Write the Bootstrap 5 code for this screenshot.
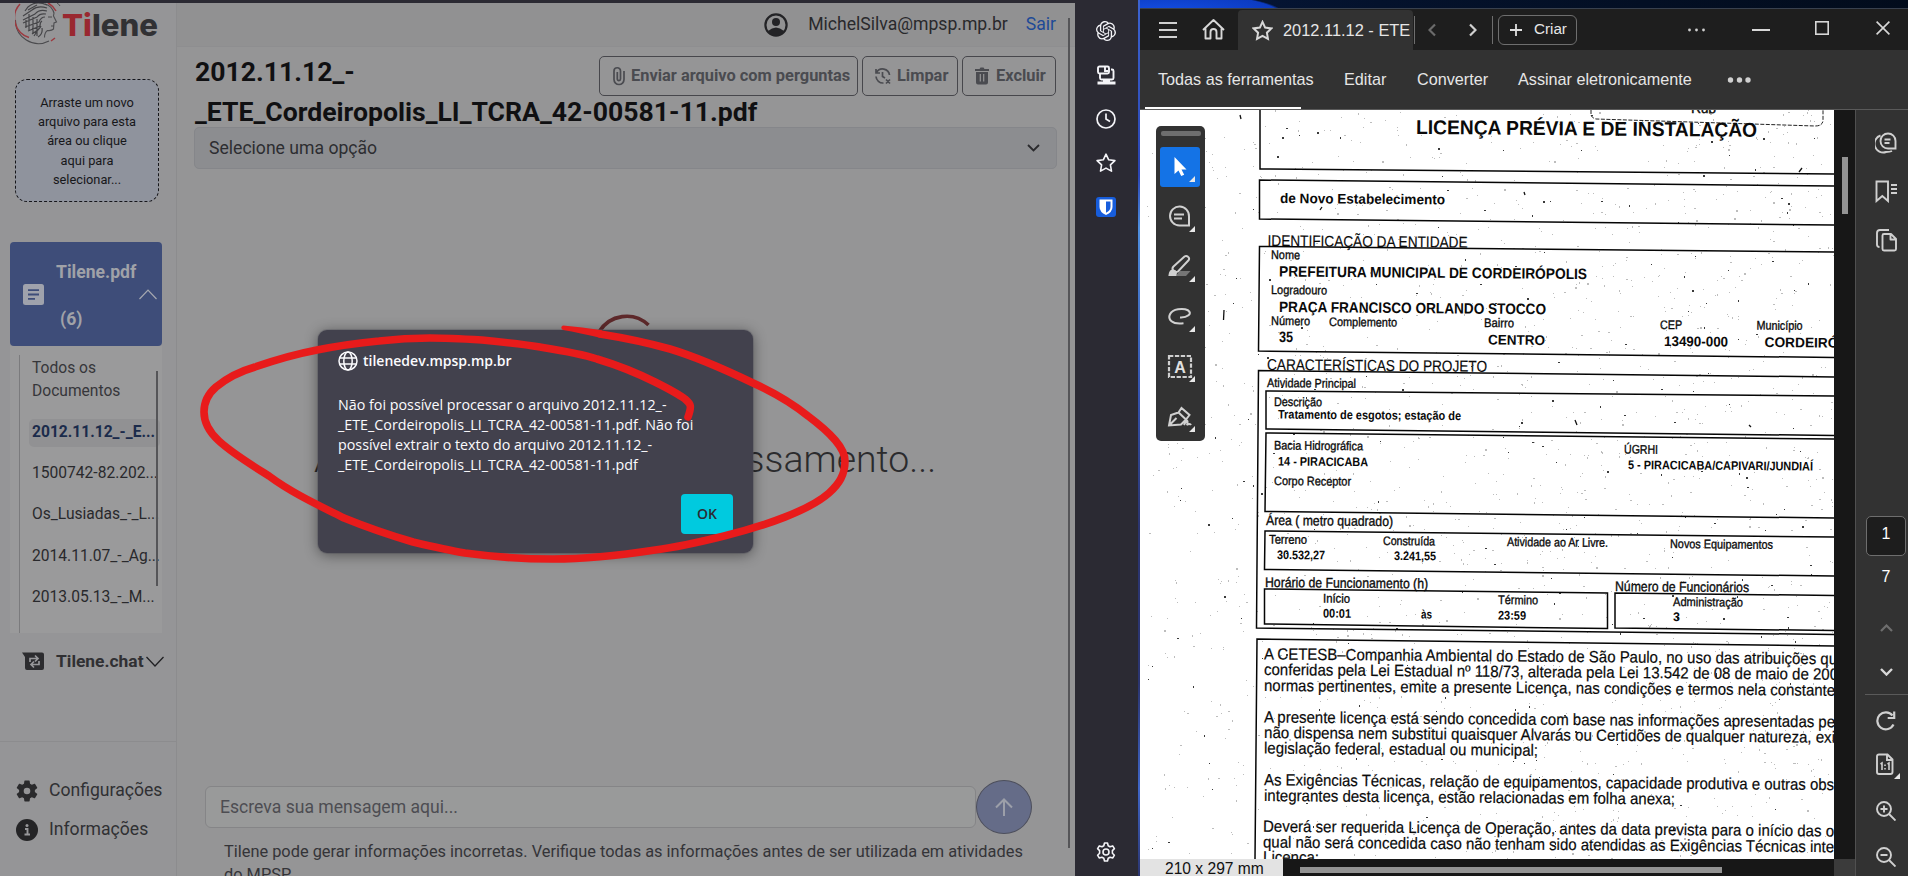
<!DOCTYPE html>
<html lang="pt-BR">
<head>
<meta charset="utf-8">
<title>Tilene</title>
<link rel="stylesheet" href="https://cdn.jsdelivr.net/npm/bootstrap@5.3.0/dist/css/bootstrap.min.css">
<script src="https://cdn.jsdelivr.net/npm/bootstrap@5.3.0/dist/js/bootstrap.bundle.min.js"></script>
<style>
html,body{height:876px;overflow:hidden;margin:0}
body{background:#2b2a33;font-family:Roboto,sans-serif;color:#29292c;font-size:17.6px}
svg{display:block;flex:none}
.desk{height:876px;width:1908px}
.tilene{width:1075px;padding-top:3px;background:#2b2a33}
.tilene-page{background:#959596;height:873px}
.side{width:177px;border-right:1px solid #8c8c8e;background:#959597}
.side-top{height:739px;border-bottom:1px solid #8c8c8e;padding:0 0 0 10px}
.logo-box{height:76px;padding-left:5px}
.drop{width:144px;height:123px;margin-left:5px;border:1px dashed #16161a;border-radius:12px;background:#8f939d;font-size:12.8px;line-height:19.2px;color:#17171a;padding-top:13px;text-align:center}
.pdf-head{width:152px;height:104px;margin-top:40px;background:#3e4d79;border-radius:4px;color:#a0a2a8;font-weight:700;font-size:17.6px}
.pdf-list{width:152px;height:287px;background:#9a9a9b}
.pdf-list ul{margin:9px 0 0 9px;border-left:1px solid #7b7b7d;height:278px;width:141px;font-size:15.6px;padding:0 0 0 9px;list-style:none}
.pdf-list li{height:28px;line-height:26px;margin-bottom:13.2px;padding-left:3px;white-space:nowrap;border-radius:5px}
.pdf-list li.first{height:46px;line-height:23px;margin:0 0 18px;padding-top:2px;color:#36363a}
.pdf-list li.on{background:#919193;color:#1b2b4b;font-weight:700}
.pdf-thumb{width:2px;height:215px;background:#555558;margin-top:25px}
.chat-head{width:154px;height:56px;font-weight:700;font-size:17.4px;color:#303033}
.foot-link{height:39px;padding-left:16px;color:#303033}
.head{height:44px;background:#919192;border-bottom:1px solid #8e8e90;padding-right:19px}
.doc-title{font-size:26.6px;line-height:40px;font-weight:700;color:#101012;margin:0;height:80px;width:600px}
.tbtn{height:40px;border:1px solid #47474c;border-radius:5px;color:#4a4b50;font-weight:700;font-size:16.4px;padding:0 9px 0 11px;white-space:nowrap}
.sel{height:42px;border:1px solid #85868a;border-radius:5px;background:#8c8d90;padding:0 16px 0 14px;width:863px;color:#2d2d31}
.msg{width:771px;height:42px;border:1px solid #858587;border-radius:6px;background:#999a9a;padding-left:14px;color:#4d4d52;line-height:41px}
.send{width:56px;height:54px;border-radius:50%;border:1px solid #4d4f5c;background:#656c88}
.note{font-size:16.37px;line-height:23px;color:#343438;padding:0 0 0 47px;white-space:nowrap;height:36px;overflow:hidden}
.waiting{font-weight:300;font-size:37.4px;color:#2b2b2d;white-space:nowrap;left:314px;top:431px;width:640px}
.vbar{left:1068px;top:18px;width:2px;height:830px;background:#555558}
.alertbox{left:318px;top:330px;width:435px;height:223px;background:#42414d;border-radius:9px;box-shadow:0 2px 14px rgba(0,0,0,.45),0 0 0 1px rgba(110,110,120,.4);color:#fbfbfe;font-family:"Open Sans","Noto Sans",sans-serif;font-size:14px;line-height:20px;padding:20px 20px 0 20px}
.amsg{font-size:14.3px;margin-top:23px;white-space:nowrap}
.okb{width:52px;height:40px;background:#00cadf;color:#2b2a33;border-radius:4px;font-weight:600}
.rail{width:63px;background:#2b2a33;padding:21px 2px 0 0}
.wall{width:2px;background:linear-gradient(#3c63d0,#2b46b4 20%,#4f8fe0 26%,#3553b0 45%,#2b3570 60%,#2b3570 78%,#3f66c8 90%,#2b3570)}
.acro{width:768px;font-family:"Liberation Sans",Arial,sans-serif;color:#e6e6e6;background:radial-gradient(ellipse 124px 22px at 20px 14px,#1450e8 0,#0c3bc0 96%,transparent 100%),linear-gradient(90deg,#06173a 0,#04122c 240px,#020c1c)}
.tabs{margin-top:8px;height:42px;background:#1e1e1e;border-top:1px solid #39414e;width:768px}
.tabone{width:175px;height:40px;margin-top:1px;background:#323232;border-radius:4px 4px 0 0;font-size:16.4px;white-space:nowrap}
.criar{width:79px;height:30px;border:1px solid #6e6e6e;border-radius:6px;font-size:15.2px}
.sep{width:1px;height:28px;background:#6e6e6e}
.menu{height:60px;background:#323232;border-bottom:1px solid #5a5a5a;font-size:16.2px;white-space:nowrap;padding-left:18px}
.underl{left:1145px;top:107px;width:156px;height:2px;background:#fff}
.scan text{transform-box:fill-box;transform-origin:0 100%;transform:rotate(.48deg);fill:#0a0a0a;font-family:"Liberation Sans",Arial,sans-serif;font-size:12.4px;stroke:#0a0a0a;stroke-width:.35px}
.scan .b{font-weight:700;stroke-width:0}
.scan .l{font-size:15px}.scan .m{font-size:14px}.scan .p{font-size:16.3px;stroke-width:.2px}
.palette{left:1156px;top:126px;width:49px;height:315px;background:#323232;border-radius:5px;padding:5px 4px 0 4px}
.vscroll{width:21px;background:#171717;padding:47px 0 0 8px}
.vscroll div{width:6px;height:57px;background:#939393}
.tools{width:53px;background:#323232;border-left:1px solid #505050;padding-left:9px}
.pagebox{width:40px;height:40px;border:1px solid #6e6e6e;border-radius:5px;background:#1d1d1d}
.bottom{height:17px;background:#171717}
.dims{width:143px;background:#e3e3e3;color:#111;font-size:15.6px;line-height:19px;padding-left:25px;white-space:nowrap}
.hth{width:422px;height:6px;background:#939393;margin:8px 0 0 17px}
.ink{left:0;top:0}
</style>
</head>
<body>
<div class="desk d-flex position-relative">

<!-- Tilene browser page -->
<div class="tilene flex-shrink-0">
<div class="tilene-page d-flex">
 <aside class="side flex-shrink-0">
  <div class="side-top">
   <div class="logo-box">
    <svg width="150" height="44" viewBox="15 3 150 44">
     <path d="M15.500 20A23 23 0 0 0 49 41" fill="none" stroke="#4b4b4e" stroke-width="1.100"/>
     <path d="M20 4a20.500 20.500 0 0 0 9 33.500M48 3a19 19 0 0 1 8 8M51 41l4-3" fill="none" stroke="#9c3a40" stroke-width="1.500"/>
     <path d="M57 3q2 1 3 3" fill="none" stroke="#4b4b4e"/>
     <path d="M45 4q7 2 9 9l-.5 3l3 6l-2.500 1l-.5 6q-2 2-6 1.500q-3 2-3 7" fill="none" stroke="#4d4d50" stroke-width="1.100"/>
     <path d="M47 5q-11-5-19 2l-3 4M47 8q-9-3-15 2l-9 6M47 11q-8-2-12 3l-12 6M46 14q-6-1-9 3l-14 6M45 17q-4 0-6 5l-14 5M42 21q-2 1-2 5l-12 5M41 26q-1 3-9 8M37 5l-9 5M38 30l-4 6M42 28q1 6-4 9M29 14v16M33 17v17M26 20v8M37 19v17" fill="none" stroke="#444447" stroke-width="1.200"/>
     <path d="M48 17h4M51 26h3" stroke="#4a4a4d"/>
     <text x="62" y="36" font-family="Inter,sans-serif" font-weight="800" font-size="30.500" textLength="96" lengthAdjust="spacingAndGlyphs" fill="#313134"><tspan fill="#9a2830">Ti</tspan>lene</text>
    </svg>
   </div>
   <div class="drop">Arraste um novo<br>arquivo para esta<br>área ou clique<br>aqui para<br>selecionar...</div>
   <div class="pdf-head d-flex align-items-center">
    <svg style="margin-left:13px" width="21" height="21" viewBox="0 0 21 21"><rect width="21" height="21" rx="2.500" fill="#9fa2ac"/><path d="M5 6.200h11M5 10.500h11M5 14.800h7" stroke="#3e4d79" stroke-width="1.800"/></svg>
    <div class="ps-2" style="width:95px"><div class="ps-1" style="padding:3px 0 20px">Tilene.pdf</div><div class="ps-2">(6)</div></div>
    <svg width="18" height="11" viewBox="0 0 18 11"><path d="M.5 10L9 1l8.500 9" fill="none" stroke="#a5a8b0" stroke-width="1.200"/></svg>
   </div>
   <div class="pdf-list d-flex">
    <ul>
     <li class="first">Todos os<br>Documentos</li>
     <li class="on">2012.11.12_-_E...</li>
     <li>1500742-82.202...</li>
     <li>Os_Lusiadas_-_L...</li>
     <li>2014.11.07_-_Ag...</li>
     <li>2013.05.13_-_M...</li>
    </ul>
    <div class="pdf-thumb" style="margin-left:-4px"></div>
   </div>
   <div class="chat-head d-flex align-items-center">
    <svg style="margin-left:12px" width="22" height="19" viewBox="0 0 22 19"><path d="M0 .5h20q2 0 2 2V16q0 2-2 2H5q-2 0-2-2V5z" fill="#2c2c2f"/><path d="M8 10V6.500h8M13 3.500l3 3-3 3M17 9v3.500H9M12 9.500l-3 3 3 3" fill="none" stroke="#97979a" stroke-width="1.700"/></svg>
    <span style="margin-left:12px">Tilene.chat</span>
    <svg class="ms-auto" width="18" height="11" viewBox="0 0 18 11"><path d="M.5 1L9 10l8.500-9" fill="none" stroke="#202023" stroke-width="1.300"/></svg>
   </div>
  </div>
  <div class="pt-4" style="margin-top:5px">
   <div class="foot-link d-flex align-items-center"><svg width="22" height="22" viewBox="2 2 20 20"><path fill="#2a2a2c" d="M19.140 12.940c.04-.3.060-.61.060-.94 0-.32-.02-.64-.07-.94l2.030-1.580c.18-.14.230-.41.120-.61l-1.920-3.320c-.12-.22-.37-.29-.59-.22l-2.390.960c-.5-.38-1.030-.7-1.620-.94l-.36-2.540c-.04-.24-.24-.41-.48-.41h-3.840c-.24 0-.43.170-.47.410l-.36 2.540c-.59.240-1.130.570-1.620.940l-2.390-.96c-.22-.08-.47 0-.59.220L2.740 8.870c-.12.210-.08.470.120.610l2.030 1.580c-.05.300-.09.630-.09.940s.02.640.070.940l-2.030 1.580c-.18.140-.23.410-.12.610l1.920 3.320c.12.220.37.290.59.220l2.390-.96c.5.380 1.030.700 1.620.940l.36 2.540c.05.240.24.410.48.410h3.840c.24 0 .44-.17.470-.41l.36-2.540c.59-.24 1.130-.56 1.620-.94l2.390.960c.22.080.47 0 .59-.22l1.920-3.320c.12-.22.070-.47-.12-.61zM12 15a3 3 0 1 1 0-6 3 3 0 0 1 0 6z"/></svg><span style="margin-left:11px">Configurações</span></div>
   <div class="foot-link d-flex align-items-center"><svg width="22" height="22" viewBox="0 0 22 22"><circle cx="11" cy="11" r="11" fill="#242426"/><path d="M9 10h2.500v5.500M8.500 15.500h5.500" stroke="#97979a" stroke-width="1.900" fill="none"/><circle cx="11" cy="6.500" r="1.500" fill="#97979a"/></svg><span style="margin-left:11px">Informações</span></div>
  </div>
 </aside>
 <main class="flex-grow-1 d-flex flex-column">
  <div class="head d-flex justify-content-end align-items-center">
   <svg width="24" height="24" viewBox="0 0 24 24"><circle cx="12" cy="12" r="10.600" fill="none" stroke="#232326" stroke-width="2.200"/><circle cx="12" cy="9" r="4" fill="#232326"/><path d="M4 18q8-7 16 0q-3 5-8 5t-8-5z" fill="#232326"/></svg>
   <span style="margin-left:20px">MichelSilva@mpsp.mp.br</span>
   <span style="margin-left:18px;color:#1e4a97">Sair</span>
  </div>
  <div class="d-flex justify-content-between" style="padding:5px 19px 0 18px;height:80px">
   <h1 class="doc-title">2012.11.12_-<br>_ETE_Cordeiropolis_LI_TCRA_42-00581-11.pdf</h1>
   <div class="d-flex position-absolute" style="left:599px;top:56px;gap:4px">
    <div class="tbtn d-flex align-items-center" style="width:259px"><svg width="16" height="20" viewBox="0 0 16 20"><path d="M13 5v8.500a4.500 4.500 0 0 1-10 0V5a3.200 3.200 0 0 1 6.500 0v8a1.500 1.500 0 0 1-3.200 0V6" fill="none" stroke="#4a4b50" stroke-width="1.700"/></svg><span style="margin-left:4px">Enviar arquivo com perguntas</span></div>
    <div class="tbtn d-flex align-items-center" style="width:96px"><svg width="18" height="18" viewBox="0 0 18 18" fill="none" stroke="#4a4b50" stroke-width="1.700"><path d="M2 2v4h4M2.500 5.500A7 7 0 0 1 15.500 8M2 9.500A7 7 0 0 0 9.500 16M8.500 5v4.500l2.500 1.500M12 12.500l4 4M16 12.500l-4 4"/></svg><span style="margin-left:5px">Limpar</span></div>
    <div class="tbtn d-flex align-items-center" style="width:94px"><svg width="16" height="18" viewBox="0 0 16 18"><path fill="#4a4b50" d="M1 2h4.500l1-1.500h3L10.500 2H15v2H1zM2 5h12v10.500q0 2-2 2H4q-2 0-2-2z"/><path d="M6.300 7v7.500M9.700 7v7.500" stroke="#959596" stroke-width="1.200"/></svg><span style="margin-left:6px">Excluir</span></div>
   </div>
  </div>
  <div class="sel d-flex align-items-center justify-content-between" style="margin-left:17px"><span>Selecione uma opção</span><svg width="13" height="8" viewBox="0 0 13 8"><path d="M1 1l5.500 5.500L12 1" fill="none" stroke="#2a2a2d" stroke-width="1.800"/></svg></div>
  <div class="mt-auto d-flex align-items-center" style="padding-left:28px;height:54px"><div class="msg">Escreva sua mensagem aqui...</div><div class="send d-flex align-items-center justify-content-center"><svg width="18" height="19" viewBox="0 0 18 19"><path d="M9 18V2M1 9.500L9 1.500l8 8" fill="none" stroke="#9c9fa9" stroke-width="2"/></svg></div></div>
  <div class="note" style="margin-top:6px">Tilene pode gerar informações incorretas. Verifique todas as informações antes de ser utilizada em atividades<br>do MPSP.</div>
 </main>
</div>
</div>
<div class="waiting position-absolute">Arquivo aguardando processamento...</div>
<div class="vbar position-absolute"></div>
<svg class="position-absolute" style="left:590px;top:308px" width="70" height="30" viewBox="590 308 70 30"><path d="M599 332A32 32 0 0 1 648.500 325" fill="none" stroke="#5e292b" stroke-width="3.600"/></svg>

<!-- browser alert -->
<div class="alertbox position-absolute d-flex flex-column" role="alertdialog">
 <div class="d-flex align-items-center" style="font-weight:600;height:22px"><svg width="20" height="20" viewBox="0 0 20 20" fill="none" stroke="#fbfbfe" stroke-width="1.500"><circle cx="10" cy="10" r="9"/><ellipse cx="10" cy="10" rx="4.200" ry="9"/><path d="M1.500 7h17M1.500 13h17"/></svg><span style="margin-left:5px">tilenedev.mpsp.mp.br</span></div>
 <div class="amsg">Não foi possível processar o arquivo 2012.11.12_-<br>_ETE_Cordeiropolis_LI_TCRA_42-00581-11.pdf. Não foi<br>possível extrair o texto do arquivo 2012.11.12_-<br>_ETE_Cordeiropolis_LI_TCRA_42-00581-11.pdf</div>
 <div class="okb align-self-end d-flex align-items-center justify-content-center" style="margin-top:19px">OK</div>
</div>

<!-- browser side rail -->
<div class="rail flex-shrink-0 d-flex flex-column align-items-center" style="gap:24px">
 <svg width="20" height="20" viewBox="0 0 24 24" fill="#f4f4f8"><path d="M22.280 9.820a5.980 5.980 0 0 0-.52-4.910 6.050 6.050 0 0 0-6.510-2.900A6.070 6.070 0 0 0 4.980 4.180a5.980 5.980 0 0 0-4 2.900 6.050 6.050 0 0 0 .740 7.100 5.980 5.980 0 0 0 .510 4.910 6.050 6.050 0 0 0 6.520 2.900A5.980 5.980 0 0 0 13.260 24a6.060 6.060 0 0 0 5.770-4.210 5.990 5.990 0 0 0 4-2.900 6.060 6.060 0 0 0-.75-7.070zm-9.020 12.610a4.480 4.480 0 0 1-2.880-1.040l.14-.08 4.780-2.760a.8.8 0 0 0 .390-.68v-6.740l2.020 1.170v5.620a4.500 4.500 0 0 1-4.450 4.510zM3.600 18.300a4.470 4.470 0 0 1-.53-3.010l.14.080 4.780 2.760a.77.77 0 0 0 .780 0l5.840-3.370v2.330l-4.870 2.820A4.500 4.500 0 0 1 3.600 18.300zM2.340 7.900a4.490 4.490 0 0 1 2.370-1.980V11.600a.77.77 0 0 0 .390.680l5.810 3.350-2.020 1.170-4.890-2.800A4.500 4.500 0 0 1 2.340 7.900zm16.600 3.860L13.100 8.360l2.020-1.160 4.880 2.800a4.500 4.500 0 0 1-.68 8.120v-5.680a.79.79 0 0 0-.38-.68zm2.010-3.030l-.14-.08-4.780-2.780a.78.78 0 0 0-.78 0L9.410 9.230V6.900l4.870-2.810a4.500 4.500 0 0 1 6.670 4.640zM8.310 12.860l-2.020-1.160V6.070a4.500 4.500 0 0 1 7.380-3.450l-.15.080-4.770 2.760a.8.8 0 0 0-.4.680zm1.090-2.370l2.600-1.500 2.610 1.500v3l-2.600 1.500-2.610-1.500z"/></svg>
 <svg width="20" height="20" viewBox="0 0 20 20" fill="none" stroke="#f4f4f8" stroke-width="1.900"><rect x="2" y="1.500" width="11" height="7" rx="1.500"/><path d="M9 2v4h3M4 9v4q0 1.500 1.500 1.500H16q1.500 0 1.500-1.500V6q0-1.500-1.500-1.500h-1"/><path d="M1.500 18h18M7 15.500h7" stroke-width="2.800"/></svg>
 <svg width="20" height="20" viewBox="0 0 20 20" fill="none" stroke="#f4f4f8" stroke-width="1.700"><circle cx="10" cy="10" r="9"/><path d="M10 4.500V10l4 2.500"/></svg>
 <svg width="20" height="20" viewBox="0 0 20 20" fill="none" stroke="#f4f4f8" stroke-width="1.600" stroke-linejoin="round"><path d="M10 1.200l2.700 5.600 6.200.8-4.500 4.300 1.100 6.200L10 15.100l-5.500 3 1.100-6.200L1.100 7.600l6.200-.8z"/></svg>
 <svg width="20" height="20" viewBox="0 0 20 20"><rect width="20" height="20" rx="3" fill="#175ddc"/><path d="M3.500 2.500h13V10q0 5-6.500 8q-6.500-3-6.500-8z" fill="#fff"/><path d="M10 4.500h4.500V10q0 3.500-4.500 5.800z" fill="#175ddc"/></svg>
 <svg class="mt-auto" style="margin-bottom:14px" width="20" height="20" viewBox="0 0 20 20" fill="none" stroke="#f4f4f8" stroke-width="1.600" stroke-linejoin="round"><path d="M8.500 1h3l.7 2.700 1.800 1 2.700-.8 1.700 2.700-2 2v2.600l2 2-1.600 2.700-2.700-.7-1.900 1-.7 2.800h-3l-.7-2.800-1.900-1-2.700.7L1.600 13.200l2-2V8.600l-2-2 1.700-2.700 2.700.8 1.800-1z"/><circle cx="10" cy="10" r="3"/></svg>
</div>
<div class="wall flex-shrink-0"></div>

<!-- PDF reader -->
<div class="acro flex-shrink-0 d-flex flex-column">
 <div class="tabs d-flex align-items-center flex-shrink-0">
  <svg style="margin-left:19px" width="18" height="18" viewBox="0 0 18 18"><path d="M0 2h18M0 9h18M0 16h18" stroke="#d0d0d0" stroke-width="1.800"/></svg>
  <svg style="margin-left:25px" width="23" height="21" viewBox="0 0 23 21" fill="none" stroke="#d8d8d8" stroke-width="1.900" stroke-linejoin="round"><path d="M1 11L11.500 1 22 11M3.500 9.500V19.500H8.500V13a3 3 0 0 1 6 0v6.500h5V9.500"/></svg>
  <div class="tabone d-flex align-items-center" style="margin-left:13px"><svg style="margin-left:14px" width="21" height="21" viewBox="0 0 20 20" fill="none" stroke="#d8d8d8" stroke-width="1.900"><path d="M10 1.800l2.500 5.400 5.900.8-4.200 4.100 1 5.900L10 15.100 4.800 18l1-5.900L1.600 8l5.900-.8z"/></svg><span style="margin-left:10px">2012.11.12 - ETE</span></div>
  <div class="sep" style="margin-left:1px"></div>
  <svg style="margin-left:13px" width="8" height="14" viewBox="0 0 8 14"><path d="M7 1.500L1.500 7 7 12.500" fill="none" stroke="#6b6b6b" stroke-width="2.200"/></svg>
  <svg style="margin-left:33px" width="8" height="14" viewBox="0 0 8 14"><path d="M1 1.500L6.500 7 1 12.500" fill="none" stroke="#d0d0d0" stroke-width="2.200"/></svg>
  <div class="sep" style="margin-left:15px"></div>
  <div class="criar d-flex align-items-center" style="margin-left:5px"><svg style="margin-left:11px" width="12" height="12" viewBox="0 0 12 12"><path d="M6 0v12M0 6h12" stroke="#e0e0e0" stroke-width="1.800"/></svg><span style="margin-left:12px">Criar</span></div>
  <svg style="margin-left:111px" width="17" height="4" viewBox="0 0 17 4" fill="#cfcfcf"><circle cx="1.500" cy="2" r="1.400"/><circle cx="8.500" cy="2" r="1.400"/><circle cx="15.500" cy="2" r="1.400"/></svg>
  <svg style="margin-left:47px" width="18" height="2"><rect width="18" height="2" fill="#d8d8d8"/></svg>
  <svg style="margin-left:45px;margin-bottom:3px" width="14" height="14" viewBox="0 0 14 14"><rect x=".8" y=".8" width="12.400" height="12.400" fill="none" stroke="#d8d8d8" stroke-width="1.600"/></svg>
  <svg style="margin-left:47px;margin-bottom:3px" width="14" height="14" viewBox="0 0 14 14"><path d="M.6.6l12.800 12.800M13.400.6L.6 13.400" stroke="#d8d8d8" stroke-width="1.600"/></svg>
 </div>
 <div class="menu d-flex align-items-center flex-shrink-0">
  <span style="width:186px">Todas as ferramentas</span><span style="width:73px">Editar</span><span style="width:101px">Converter</span><span style="width:209px">Assinar eletronicamente</span>
  <svg width="25" height="6" viewBox="0 0 25 6" fill="#d0d0d0"><circle cx="3.500" cy="3" r="2.700"/><circle cx="12.500" cy="3" r="2.700"/><circle cx="21" cy="3" r="2.700"/></svg>
 </div>
 <div class="d-flex flex-grow-1" style="min-height:0">
  <div class="d-flex flex-column">
   <div class="d-flex" style="height:749px">
    <svg class="scan" width="694" height="749" viewBox="1140 110 694 749" style="background:#fff">
     <path id="specks" fill="#bdbdbd"/><path id="grit" fill="#3a3a3a"/>
     <path fill="none" stroke="#111" stroke-width="1.300" d="M1224 310l-.5 10M1240 115l1 4M1524 192l1 3M1802 168l-3 4M1575 420l2 5M1749 425l2 2M1320 210l2-3"/>
     <path fill="none" stroke="#050505" stroke-width="1.500" d="M1260 108V169L1834 174M1834 186L1259.500 180V219L1834 225M1834 252L1259.500 246.500L1258.500 351L1834 357.500M1834 377L1258.500 370.500L1256.500 628L1834 634.500M1834 396L1266 391V429L1834 435.500M1834 439L1266 433L1265 511.500L1834 518M1834 537L1265 531L1264.500 569.500L1834 576M1264.500 589L1607.500 593V628.500L1264.500 624zM1834 595.500L1615 593V628L1834 630.500M1834 646L1257 639L1255 860"/>
     <path fill="none" stroke="#222" stroke-dasharray="4 1.500" d="M1591 110v5q1 3 5 4L1815 126q8 0 8-6V110"/>
     <text class="m" x="1691" y="113" textLength="25">Rub</text>
     <text class="b" style="font-size:20px" x="1416" y="134" textLength="341" lengthAdjust="spacingAndGlyphs">LICENÇA PRÉVIA E DE INSTALAÇÃO</text>
     <text class="b m" x="1280" y="203" textLength="165" lengthAdjust="spacingAndGlyphs">de Novo Estabelecimento</text>
     <text style="font-size:15.500px;stroke-width:.15px" x="1267.500" y="246" textLength="200" lengthAdjust="spacingAndGlyphs">IDENTIFICAÇÃO DA ENTIDADE</text>
     <text x="1271" y="259" textLength="29" lengthAdjust="spacingAndGlyphs">Nome</text>
     <text class="b l" x="1279" y="276.500" textLength="308" lengthAdjust="spacingAndGlyphs">PREFEITURA MUNICIPAL DE CORDEIRÓPOLIS</text>
     <text x="1271" y="294" textLength="56" lengthAdjust="spacingAndGlyphs">Logradouro</text>
     <text class="b l" x="1279" y="312" textLength="267" lengthAdjust="spacingAndGlyphs">PRAÇA FRANCISCO ORLANDO STOCCO</text>
     <text x="1271" y="325" textLength="39" lengthAdjust="spacingAndGlyphs">Número</text>
     <text x="1329" y="326" textLength="68" lengthAdjust="spacingAndGlyphs">Complemento</text>
     <text x="1484" y="327" textLength="30" lengthAdjust="spacingAndGlyphs">Bairro</text>
     <text x="1660" y="329" textLength="22" lengthAdjust="spacingAndGlyphs">CEP</text>
     <text x="1756.500" y="329.500" textLength="46" lengthAdjust="spacingAndGlyphs">Município</text>
     <text class="b l" x="1279" y="342" textLength="14" lengthAdjust="spacingAndGlyphs">35</text>
     <text class="b m" x="1488" y="344.500" textLength="57" lengthAdjust="spacingAndGlyphs">CENTRO</text>
     <text class="b m" x="1664" y="346" textLength="64" lengthAdjust="spacingAndGlyphs">13490-000</text>
     <text class="b m" x="1764.500" y="347" textLength="115" lengthAdjust="spacingAndGlyphs">CORDEIRÓPOLIS</text>
     <text style="font-size:15.800px;stroke-width:.15px" x="1267" y="370" textLength="220" lengthAdjust="spacingAndGlyphs">CARACTERÍSTICAS DO PROJETO</text>
     <text x="1267" y="387" textLength="89" lengthAdjust="spacingAndGlyphs">Atividade Principal</text>
     <text x="1274" y="406" textLength="48" lengthAdjust="spacingAndGlyphs">Descrição</text>
     <text class="b" x="1278" y="418.500" textLength="183" lengthAdjust="spacingAndGlyphs">Tratamento de esgotos; estação de</text>
     <text x="1274" y="449.500" textLength="89" lengthAdjust="spacingAndGlyphs">Bacia Hidrográfica</text>
     <text x="1624" y="453.500" textLength="34" lengthAdjust="spacingAndGlyphs">ÚGRHI</text>
     <text class="b" x="1278" y="465.500" textLength="90" lengthAdjust="spacingAndGlyphs">14 - PIRACICABA</text>
     <text class="b" x="1628" y="469" textLength="185" lengthAdjust="spacingAndGlyphs">5 - PIRACICABA/CAPIVARI/JUNDIAÍ</text>
     <text x="1274" y="485" textLength="77" lengthAdjust="spacingAndGlyphs">Corpo Receptor</text>
     <text class="m" x="1266" y="525" textLength="127" lengthAdjust="spacingAndGlyphs">Área ( metro quadrado)</text>
     <text x="1269" y="543.500" textLength="38" lengthAdjust="spacingAndGlyphs">Terreno</text>
     <text x="1383" y="545" textLength="52" lengthAdjust="spacingAndGlyphs">Construída</text>
     <text x="1507" y="546" textLength="101" lengthAdjust="spacingAndGlyphs">Atividade ao Ar Livre.</text>
     <text x="1670" y="548" textLength="103" lengthAdjust="spacingAndGlyphs">Novos Equipamentos</text>
     <text class="b" x="1277" y="559" textLength="48" lengthAdjust="spacingAndGlyphs">30.532,27</text>
     <text class="b" x="1394" y="560" textLength="42" lengthAdjust="spacingAndGlyphs">3.241,55</text>
     <text class="m" x="1265" y="587" textLength="163" lengthAdjust="spacingAndGlyphs">Horário de Funcionamento (h)</text>
     <text class="m" x="1615" y="591" textLength="134" lengthAdjust="spacingAndGlyphs">Número de Funcionários</text>
     <text x="1323" y="602.500" textLength="27" lengthAdjust="spacingAndGlyphs">Início</text>
     <text x="1498" y="604" textLength="40" lengthAdjust="spacingAndGlyphs">Término</text>
     <text x="1673" y="606" textLength="70" lengthAdjust="spacingAndGlyphs">Administração</text>
     <text class="b" x="1323" y="617.500" textLength="28" lengthAdjust="spacingAndGlyphs">00:01</text>
     <text class="b" x="1421" y="618.500" textLength="11" lengthAdjust="spacingAndGlyphs">às</text>
     <text class="b" x="1498" y="619.500" textLength="28" lengthAdjust="spacingAndGlyphs">23:59</text>
     <text class="b" x="1673" y="621">3</text>
     <text class="p" x="1264" y="659.500" textLength="573" lengthAdjust="spacingAndGlyphs">A CETESB–Companhia Ambiental do Estado de São Paulo, no uso das atribuições qu</text>
     <text class="p" x="1264" y="675" textLength="574" lengthAdjust="spacingAndGlyphs">conferidas pela Lei Estadual nº 118/73, alterada pela Lei 13.542 de 08 de maio de 200</text>
     <text class="p" x="1264" y="691" textLength="571" lengthAdjust="spacingAndGlyphs">normas pertinentes, emite a presente Licença, nas condições e termos nela constante</text>
     <text class="p" x="1264" y="722.500" textLength="571" lengthAdjust="spacingAndGlyphs">A presente licença está sendo concedida com base nas informações apresentadas pe</text>
     <text class="p" x="1264" y="738" textLength="571" lengthAdjust="spacingAndGlyphs">não dispensa nem substitui quaisquer Alvarás ou Certidões de qualquer natureza, exi</text>
     <text class="p" x="1264" y="753.500" textLength="274" lengthAdjust="spacingAndGlyphs">legislação federal, estadual ou municipal;</text>
     <text class="p" x="1264" y="785.300" textLength="570" lengthAdjust="spacingAndGlyphs">As Exigências Técnicas, relação de equipamentos, capacidade produtiva e outras obs</text>
     <text class="p" x="1264" y="801" textLength="411" lengthAdjust="spacingAndGlyphs">integrantes desta licença, estão relacionadas em folha anexa;</text>
     <text class="p" x="1263" y="831.700" textLength="571" lengthAdjust="spacingAndGlyphs">Deverá ser requerida Licença de Operação, antes da data prevista para o início das o</text>
     <text class="p" x="1263" y="847.500" textLength="571" lengthAdjust="spacingAndGlyphs">qual não será concedida caso não tenham sido atendidas as Exigências Técnicas inte</text>
     <text class="p" x="1263" y="862.500" textLength="56" lengthAdjust="spacingAndGlyphs">Licença:</text>
    </svg>
    <div class="vscroll"><div></div></div>
   </div>
   <div class="bottom d-flex"><div class="dims">210 x 297 mm</div><div class="hth"></div><div class="ms-auto" style="width:21px;background:#3b3b3b"></div></div>
  </div>
  <div class="tools">
   <div class="d-flex flex-column align-items-center" style="width:42px;padding-top:22px">
    <svg width="22" height="22" viewBox="0 0 22 22" fill="none" stroke="#d0d0d0" stroke-width="1.900"><path d="M20.500 16.500V9A7.500 7.500 0 1 0 13 16.500zM9.500 7.500h6M9.500 11h5M5.500 3.500a8.500 8.500 0 0 0 5.500 16.500q4 0 6-1"/></svg>
    <svg style="margin-top:26px" width="22" height="23" viewBox="0 0 22 23" fill="none" stroke="#d0d0d0" stroke-width="1.900"><path d="M1.500 1.500h11.500V21l-5.700-5-5.800 5zM16 5h6M16 9h6M16 13h6"/></svg>
    <svg style="margin-top:26px" width="21" height="23" viewBox="0 0 21 23" fill="none" stroke="#d0d0d0" stroke-width="1.900" stroke-linejoin="round"><path d="M8 5h7l5 5v10q0 1.500-1.500 1.500H8q-1.500 0-1.500-1.500V6.500Q6.500 5 8 5zM14.500 5v5.500H20M3.500 18Q1 18 1 15.500V4q0-3 3-3h9"/></svg>
    <div class="pagebox text-center" style="margin-top:264px;font-size:16px;line-height:33px;color:#fff">1</div>
    <div style="font-size:16px;line-height:20px;margin-top:11px;color:#fff">7</div>
    <svg style="margin-top:37px" width="13" height="8" viewBox="0 0 13 8"><path d="M1 7l5.500-5.500L12 7" fill="none" stroke="#6e6e6e" stroke-width="2.200"/></svg>
    <svg style="margin-top:36px" width="13" height="8" viewBox="0 0 13 8"><path d="M1 1l5.500 5.500L12 1" fill="none" stroke="#d8d8d8" stroke-width="2.400"/></svg>
    <div style="margin-top:18px;width:43px;height:1px;background:#5a5a5a"></div>
    <svg style="margin-top:15px" width="20" height="21" viewBox="0 0 20 21" fill="none" stroke="#d0d0d0" stroke-width="2.200"><path d="M17.500 14.500A8.500 8.500 0 1 1 16.500 5.500M18.200 1.500v6.500h-6.500"/></svg>
    <svg style="margin-top:22px;margin-left:4px" width="26" height="26" viewBox="0 0 26 26" fill="none" stroke="#d0d0d0" stroke-width="1.900"><path d="M4 1.500h8.500l5 5V19q0 2-2 2H4q-2 0-2-2V3.500q0-2 2-2zM12 2v5h5.500"/><path d="M5.500 11l1.500-1v7M12.500 11l1.500-1v7M10 11.500v1.500M10 15v1.500" stroke-width="1.600"/><path d="M25 20v6h-6z" fill="#e8e8e8" stroke="none"/></svg>
    <svg style="margin-top:22px" width="20" height="20" viewBox="0 0 20 20" fill="none" stroke="#d0d0d0" stroke-width="1.900"><circle cx="8" cy="8" r="7"/><path d="M13 13l6.500 6.500M4.500 8h7M8 4.500v7"/></svg>
    <svg style="margin-top:26px" width="20" height="20" viewBox="0 0 20 20" fill="none" stroke="#d0d0d0" stroke-width="1.900"><circle cx="8" cy="8" r="7"/><path d="M13 13l6.500 6.500M4.500 8h7"/></svg>
   </div>
  </div>
 </div>
</div>
<div class="underl position-absolute"></div>
<div class="palette position-absolute">
 <svg width="41" height="315" viewBox="1160 131 41 315">
  <rect x="1161" y="131" width="40" height="5" rx="2" fill="#6e6e6e"/>
  <rect x="1160" y="147" width="40" height="40" rx="3" fill="#1473e6"/>
  <path d="M1174.500 157v17l4-3.500 2.700 5.500 3-1.300-2.700-5.300h5z" fill="#fff"/>
  <g fill="#e8e8e8"><path d="M1195 176v6h-6zM1195 226v6h-6zM1195 276v6h-6zM1195 326v6h-6zM1195 376v6h-6zM1195 426v6h-6z"/></g>
  <path d="M1175.500 276l4.500-5h10.500l-4.500 5z" fill="#757575"/>
  <g fill="none" stroke="#d0d0d0" stroke-width="2"><path d="M1189 225.500V216.500A9.500 9.500 0 1 0 1179.500 225.500zM1174 214.500h10M1174 218.500h8"/>
  <path d="M1173.500 266.500L1184.500 256.500q1.800-1.300 3.500.3q2 1.700.3 3.700L1178 271.500q-2.500 1.500-4.500-.5q-2-2.500 0-4.500z"/><path d="M1169.500 275q.5-5 4-4.500t2 4.500z" fill="#d0d0d0"/>
  <path d="M1180 317.500q5.500.3 8.500-2.200t-.5-5q-4-2-10-1t-8 5t1.500 7t12 2" stroke-width="2.100"/>
  <rect x="1169" y="356" width="22" height="21" stroke-dasharray="4.300 1.600" stroke-width="2.200"/>
  <path d="M1169 425.500L1171 415 1178.500 412.500 1186 419.500 1181 424.500zM1178.500 412.500l3-4.500 8 7-3.500 4.500M1169.500 425l7-7M1184 425q3-6 3.500-3.500t-1 3.500q3.500-2 4.500 0"/></g>
  <text x="1180" y="372.500" text-anchor="middle" font-family="Liberation Sans" font-weight="700" font-size="16" fill="#e0e0e0">A</text>
 </svg>
</div>

<!-- red marker stroke -->
<svg class="ink position-absolute" width="1075" height="876" viewBox="0 0 1075 876" style="pointer-events:none"><path d="M600 334C625 338 645 342 670 349C700 358 728 371 753 383C775 393 793 404 808 416C832 434 845 448 845 461C845 475 839 484 829 493C810 510 765 526 724 536C700 542 678 547 655 550C622 555 590 559 553 559C525 559 494 557 465 553C447 550 430 546 413 542C389 535 366 527 344 518C318 505 292 493 269 476C250 464 232 453 219 441C208 431 204 422 204 412C204 402 209 393 216 387C227 378 241 371 255 367C275 360 296 354 317 350C337 346 358 343 379 341C396 339 413 338 430 338C447 338 465 339 482 340C502 342 521 344 540 347C559 350 579 353 597 359C617 365 637 373 655 382C667 388 677 393 685 399C691 404 692 406 688 417" fill="none" stroke="#e81b1b" stroke-width="7.600" stroke-linejoin="round" stroke-linecap="round"/><path d="M563 325.500Q582 327 602 330.200L600 337.800Q580 333 563 330q-3.500-2.500 0-4.500z" fill="#e81b1b"/></svg>
</div>
<script>
// dust of the scanned sheet
let s=77;const r=()=>(s=(s*16807)%2147483647)/2147483647;
const dust=(n,max)=>{let d='';for(let i=0;i<n;i++){const x=Math.round(1145+Math.pow(r(),.8)*688),y=Math.round(110+r()*749),w=1+Math.floor(r()*max),h=1+Math.floor(r()*max);d+=`M${x} ${y}h${w}v${h}h-${w}z`}return d};
specks.setAttribute('d',dust(1700,1.2));
grit.setAttribute('d',dust(220,1.5));
</script>
</body>
</html>
